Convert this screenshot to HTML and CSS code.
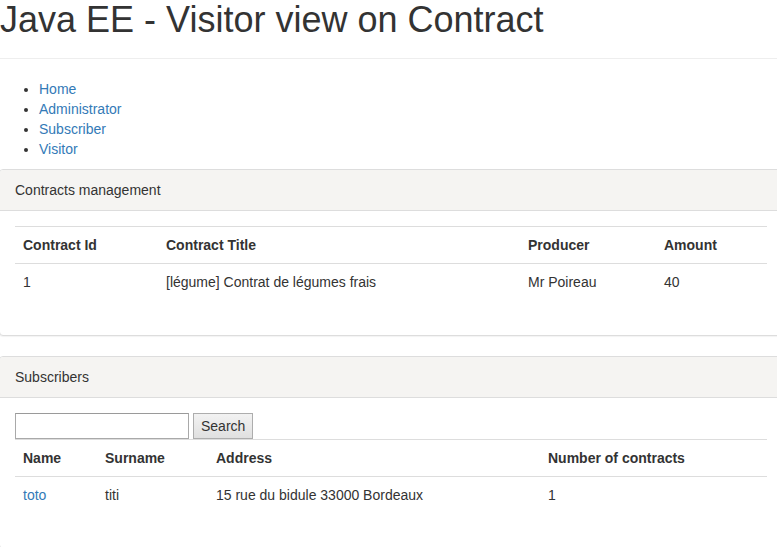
FILE: index.html
```html
<!DOCTYPE html>
<html lang="en">
<head>
    <meta charset="UTF-8">
    <title>Java EE - Visitor view on Contract</title>
    <link rel="stylesheet" href="styles.css">
</head>
<body>
    <div class="page-header">
        <h1>Java EE - Visitor view on Contract</h1>
    </div>

    <ul class="nav-links">
        <li><a href="#">Home</a></li>
        <li><a href="#">Administrator</a></li>
        <li><a href="#">Subscriber</a></li>
        <li><a href="#">Visitor</a></li>
    </ul>

    <div class="panel">
        <div class="panel-heading">Contracts management</div>
        <div class="panel-body">
            <table class="table contracts">
                <thead>
                    <tr>
                        <th class="c-id">Contract Id</th>
                        <th class="c-title">Contract Title</th>
                        <th class="c-producer">Producer</th>
                        <th class="c-amount">Amount</th>
                    </tr>
                </thead>
                <tbody>
                    <tr>
                        <td>1</td>
                        <td>[légume] Contrat de légumes frais</td>
                        <td>Mr Poireau</td>
                        <td>40</td>
                    </tr>
                </tbody>
            </table>
        </div>
    </div>

    <div class="panel">
        <div class="panel-heading">Subscribers</div>
        <div class="panel-body">
            <form class="search" onsubmit="return false">
                <input type="text" name="q">
                <button type="submit">Search</button>
            </form>
            <table class="table subscribers">
                <thead>
                    <tr>
                        <th class="s-name">Name</th>
                        <th class="s-surname">Surname</th>
                        <th class="s-address">Address</th>
                        <th class="s-count">Number of contracts</th>
                    </tr>
                </thead>
                <tbody>
                    <tr>
                        <td><a href="#">toto</a></td>
                        <td>titi</td>
                        <td>15 rue du bidule 33000 Bordeaux</td>
                        <td>1</td>
                    </tr>
                </tbody>
            </table>
        </div>
    </div>
</body>
</html>
```

FILE: styles.css
```css
* {
    box-sizing: border-box;
}
html {
    overflow-x: hidden;
}
body {
    margin: 0;
    font-family: "Liberation Sans", Arial, Helvetica, sans-serif;
    font-size: 14px;
    line-height: 20px;
    color: #333;
    background: #fff;
    overflow-x: hidden;
}
a {
    color: #337ab7;
    text-decoration: none;
}
.page-header {
    margin: 0 0 20px;
    padding-bottom: 8px;
    border-bottom: 1px solid #eee;
}
.page-header h1 {
    margin: 0 0 10px;
    font-size: 36px;
    font-weight: 400;
    line-height: 1.1;
}
.nav-links {
    margin: 0 0 10px;
    padding-left: 39px;
}
.panel {
    margin: 0 -7px 20px -1px;
    background: #fff;
    border: 1px solid #ddd;
    border-radius: 4px;
    box-shadow: 0 1px 1px rgba(0, 0, 0, 0.05);
}
.panel-heading {
    padding: 10px 15px;
    background: #f5f4f2;
    border-bottom: 1px solid #ddd;
    border-radius: 3px 3px 0 0;
}
.panel-body {
    padding: 15px;
}
.table {
    width: 752px;
    margin-bottom: 20px;
    border-collapse: collapse;
    border-spacing: 0;
}
.table th,
.table td {
    padding: 8px;
    text-align: left;
    vertical-align: top;
    border-top: 1px solid #ddd;
}
.table th {
    font-weight: 700;
    vertical-align: bottom;
    border-bottom: 1px solid #ddd;
}
.c-id { width: 143px; }
.c-title { width: 362px; }
.c-producer { width: 136px; }
.c-amount { width: 111px; }
.s-name { width: 82px; }
.s-surname { width: 111px; }
.s-address { width: 332px; }
.s-count { width: 227px; }
.search {
    display: flex;
    gap: 4px;
    height: 26px;
}
.search input {
    width: 174px;
    height: 26px;
    padding: 1px 2px;
    font: inherit;
    border: 1px solid #a9a9a9;
    border-top-color: #9a9a9a;
    background: #fff;
}
.search button {
    height: 26px;
    padding: 1px 7px;
    font: inherit;
    color: #333;
    border: 1px solid #adadad;
    background: linear-gradient(#f2f2f2, #e0e0e0);
}
```
